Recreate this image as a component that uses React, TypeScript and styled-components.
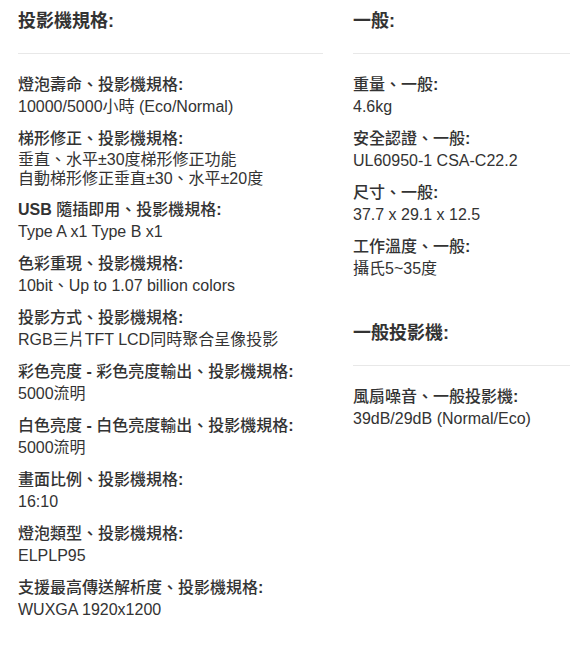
import React from "react";
import styled, { createGlobalStyle } from "styled-components";

const textColor = "#333333";
const lineColor = "#e8e8e8";

const GlobalStyle = createGlobalStyle`
  html, body {
    margin: 0;
    padding: 0;
    background: #ffffff;
    overflow: hidden;
  }
  body {
    font-family: "Liberation Sans", Arial, "Noto Sans CJK TC", sans-serif;
    color: ${textColor};
  }
`;

const Page = styled.div`
  display: grid;
  grid-template-columns: 305px 1fr;
  column-gap: 30px;
  padding: 9px 0 0 18px;
`;

const Column = styled.div`
  display: flex;
  flex-direction: column;
`;

const Section = styled.section`
  & + & {
    margin-top: 31px;
  }
`;

const SectionTitle = styled.h3`
  margin: 0;
  font-size: 18px;
  line-height: 24px;
  font-weight: 700;
  color: ${textColor};
`;

const Divider = styled.hr`
  margin: 20px 0 20px;
  border: 0;
  border-top: 1px solid ${lineColor};
  height: 0;
`;

const SpecList = styled.dl`
  margin: 0;
`;

const SpecItem = styled.div`
  margin-bottom: 11px;
`;

const SpecLabel = styled.dt`
  font-size: 16px;
  line-height: 22px;
  font-weight: 500;
  color: ${textColor};
`;

// latin bits of a label (USB, -, :) render in the heavy face
const LatinBold = styled.b`
  font-weight: 700;
`;

const SpecValue = styled.dd<{ $tight?: boolean }>`
  margin: 0;
  font-size: 16px;
  line-height: ${(props) => (props.$tight ? "19px" : "21px")};
  color: ${textColor};
`;

type Spec = { label: string; value: string[] };

const projectorSpecs: Spec[] = [
  { label: "燈泡壽命、投影機規格:", value: ["10000/5000小時 (Eco/Normal)"] },
  {
    label: "梯形修正、投影機規格:",
    value: ["垂直、水平±30度梯形修正功能", "自動梯形修正垂直±30、水平±20度"],
  },
  { label: "USB 隨插即用、投影機規格:", value: ["Type A x1 Type B x1"] },
  { label: "色彩重現、投影機規格:", value: ["10bit、Up to 1.07 billion colors"] },
  { label: "投影方式、投影機規格:", value: ["RGB三片TFT LCD同時聚合呈像投影"] },
  { label: "彩色亮度 - 彩色亮度輸出、投影機規格:", value: ["5000流明"] },
  { label: "白色亮度 - 白色亮度輸出、投影機規格:", value: ["5000流明"] },
  { label: "畫面比例、投影機規格:", value: ["16:10"] },
  { label: "燈泡類型、投影機規格:", value: ["ELPLP95"] },
  { label: "支援最高傳送解析度、投影機規格:", value: ["WUXGA 1920x1200"] },
];

const generalSpecs: Spec[] = [
  { label: "重量、一般:", value: ["4.6kg"] },
  { label: "安全認證、一般:", value: ["UL60950-1 CSA-C22.2"] },
  { label: "尺寸、一般:", value: ["37.7 x 29.1 x 12.5"] },
  { label: "工作溫度、一般:", value: ["攝氏5~35度"] },
];

const generalProjectorSpecs: Spec[] = [
  { label: "風扇噪音、一般投影機:", value: ["39dB/29dB (Normal/Eco)"] },
];

function renderLabel(label: string) {
  return label.split(/([A-Za-z:\-]+)/).map((part, i) =>
    /^[A-Za-z:\-]+$/.test(part) ? <LatinBold key={i}>{part}</LatinBold> : part
  );
}

function SpecSection({ title, specs }: { title: string; specs: Spec[] }) {
  return (
    <Section>
      <SectionTitle>{title}</SectionTitle>
      <Divider />
      <SpecList>
        {specs.map((spec) => (
          <SpecItem key={spec.label}>
            <SpecLabel>{renderLabel(spec.label)}</SpecLabel>
            <SpecValue $tight={spec.value.length > 1}>
              {spec.value.map((line, i) => (
                <React.Fragment key={line}>
                  {i > 0 && <br />}
                  {line}
                </React.Fragment>
              ))}
            </SpecValue>
          </SpecItem>
        ))}
      </SpecList>
    </Section>
  );
}

export default function App() {
  return (
    <>
      <GlobalStyle />
      <Page>
        <Column>
          <SpecSection title="投影機規格:" specs={projectorSpecs} />
        </Column>
        <Column>
          <SpecSection title="一般:" specs={generalSpecs} />
          <SpecSection title="一般投影機:" specs={generalProjectorSpecs} />
        </Column>
      </Page>
    </>
  );
}
